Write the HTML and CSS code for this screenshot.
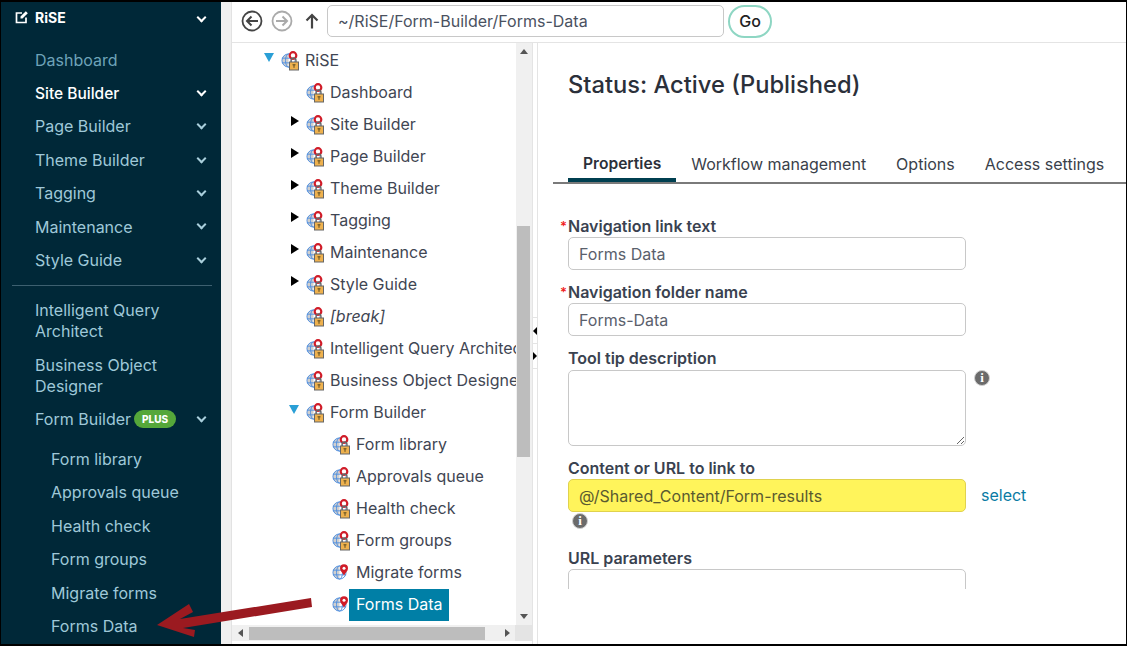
FILE: index.html
```html
<!DOCTYPE html>
<html lang="en">
<head>
  <meta charset="UTF-8">
  <title>RiSE - Forms Data</title>
  <link rel="stylesheet" href="styles.css">
</head>
<body>

<svg class="icon-defs" width="0" height="0">
  <defs>
    <symbol id="globe" viewBox="0 0 16 16">
      <path d="M8 1a7 7 0 0 0 0 14z" fill="#cfcfcf"/>
      <circle cx="8" cy="8" r="7" fill="none" stroke="#4f8fe0" stroke-width="1"/>
      <ellipse cx="8" cy="8" rx="3.200" ry="7" fill="none" stroke="#4f8fe0" stroke-width="1"/>
      <path d="M1 5.500h14M1 10.500h14" stroke="#4f8fe0" stroke-width="1"/>
    </symbol>
    <symbol id="page-locked" viewBox="0 0 18 20">
      <use href="#globe" x="0" y="2" width="15" height="15"/>
      <circle cx="12" cy="4.500" r="3.300" fill="#fff" stroke="#d01c28" stroke-width="2.200"/>
      <path d="M10 11V9.500a2.500 2.500 0 0 1 5 0V11" fill="none" stroke="#666" stroke-width="1.300"/>
      <rect x="8.500" y="11" width="9" height="8" fill="#eeb14e" stroke="#666" stroke-width="1"/>
      <path d="M11.500 13.800h3M13 13.800v3" stroke="#5a4a20" stroke-width="1"/>
    </symbol>
    <symbol id="page-pin" viewBox="0 0 18 20">
      <use href="#globe" x="0" y="2" width="15" height="15"/>
      <path d="M12 12.500c-1.600-2.700-4-4.500-4-7.200a4 4 0 0 1 8 0c0 2.700-2.400 4.500-4 7.200z" fill="#d01c28"/>
      <circle cx="12" cy="5.200" r="1.500" fill="#fff"/>
    </symbol>
  </defs>
</svg>

<div class="page">
  <nav class="sidebar">
    <div class="side-head">
      <svg class="edit-icon" viewBox="0 0 14 14"><path d="M11 7.500V12.500H1.500V3H7" fill="none" stroke="#fff" stroke-width="1.700"/><path d="M5.500 8.500V6.500L10.800 1.200l2 2L7.500 8.500z" fill="#fff"/></svg>
      <span class="side-title">RiSE</span>
      <span class="chev chev-white"></span>
    </div>
    <ul class="side-list">
      <li class="side-item">Dashboard</li>
      <li class="side-item is-active">Site Builder<span class="chev chev-white"></span></li>
      <li class="side-item is-light">Page Builder<span class="chev"></span></li>
      <li class="side-item is-light">Theme Builder<span class="chev"></span></li>
      <li class="side-item is-light">Tagging<span class="chev"></span></li>
      <li class="side-item is-light">Maintenance<span class="chev"></span></li>
      <li class="side-item is-light">Style Guide<span class="chev"></span></li>
    </ul>
    <hr class="side-rule">
    <ul class="side-list">
      <li class="side-item is-light is-wrapped">Intelligent Query Architect</li>
      <li class="side-item is-light is-wrapped">Business Object Designer</li>
      <li class="side-item is-light">Form Builder <span class="plus-badge">PLUS</span><span class="chev"></span></li>
    </ul>
    <ul class="side-list sub-list">
      <li class="side-item is-light">Form library</li>
      <li class="side-item is-light">Approvals queue</li>
      <li class="side-item is-light">Health check</li>
      <li class="side-item is-light">Form groups</li>
      <li class="side-item is-light">Migrate forms</li>
      <li class="side-item is-light">Forms Data</li>
    </ul>
  </nav>

  <div class="gutter"></div>

  <main class="main">
    <div class="toolbar">
      <svg class="nav-btn" viewBox="0 0 22 22"><circle cx="11" cy="11" r="9.500" fill="none" stroke="#444" stroke-width="1.800"/><path d="M17 11H6M10.500 6.500L6 11l4.500 4.500" fill="none" stroke="#444" stroke-width="2"/></svg>
      <svg class="nav-btn" viewBox="0 0 22 22"><circle cx="11" cy="11" r="9.500" fill="none" stroke="#aaa" stroke-width="1.800"/><path d="M5 11h11M11.500 6.500L16 11l-4.500 4.500" fill="none" stroke="#aaa" stroke-width="2"/></svg>
      <svg class="up-btn" viewBox="0 0 14 16"><path d="M7 15.500V2M1.500 7.500L7 2l5.500 5.500" fill="none" stroke="#444" stroke-width="2.200"/></svg>
      <input class="path-input" type="text" value="~/RiSE/Form-Builder/Forms-Data">
      <button class="go-btn">Go</button>
    </div>

    <div class="panes">
      <div class="tree-pane">
        <div class="tree-view">
          <ul class="tree">
            <li class="tree-row lvl-0"><span class="twist twist-open"></span><svg class="page-icon"><use href="#page-locked"/></svg>RiSE</li>
            <li class="tree-row lvl-1"><span class="twist"></span><svg class="page-icon"><use href="#page-locked"/></svg>Dashboard</li>
            <li class="tree-row lvl-1"><span class="twist twist-closed"></span><svg class="page-icon"><use href="#page-locked"/></svg>Site Builder</li>
            <li class="tree-row lvl-1"><span class="twist twist-closed"></span><svg class="page-icon"><use href="#page-locked"/></svg>Page Builder</li>
            <li class="tree-row lvl-1"><span class="twist twist-closed"></span><svg class="page-icon"><use href="#page-locked"/></svg>Theme Builder</li>
            <li class="tree-row lvl-1"><span class="twist twist-closed"></span><svg class="page-icon"><use href="#page-locked"/></svg>Tagging</li>
            <li class="tree-row lvl-1"><span class="twist twist-closed"></span><svg class="page-icon"><use href="#page-locked"/></svg>Maintenance</li>
            <li class="tree-row lvl-1"><span class="twist twist-closed"></span><svg class="page-icon"><use href="#page-locked"/></svg>Style Guide</li>
            <li class="tree-row lvl-1"><span class="twist"></span><svg class="page-icon"><use href="#page-locked"/></svg><em>[break]</em></li>
            <li class="tree-row lvl-1"><span class="twist"></span><svg class="page-icon"><use href="#page-locked"/></svg>Intelligent Query Architect</li>
            <li class="tree-row lvl-1"><span class="twist"></span><svg class="page-icon"><use href="#page-locked"/></svg>Business Object Designer</li>
            <li class="tree-row lvl-1"><span class="twist twist-open"></span><svg class="page-icon"><use href="#page-locked"/></svg>Form Builder</li>
            <li class="tree-row lvl-2"><span class="twist"></span><svg class="page-icon"><use href="#page-locked"/></svg>Form library</li>
            <li class="tree-row lvl-2"><span class="twist"></span><svg class="page-icon"><use href="#page-locked"/></svg>Approvals queue</li>
            <li class="tree-row lvl-2"><span class="twist"></span><svg class="page-icon"><use href="#page-locked"/></svg>Health check</li>
            <li class="tree-row lvl-2"><span class="twist"></span><svg class="page-icon"><use href="#page-locked"/></svg>Form groups</li>
            <li class="tree-row lvl-2"><span class="twist"></span><svg class="page-icon"><use href="#page-pin"/></svg>Migrate forms</li>
            <li class="tree-row lvl-2"><span class="twist"></span><svg class="page-icon"><use href="#page-pin"/></svg><span class="tree-selected">Forms Data</span></li>
          </ul>
          <div class="vscroll">
            <span class="tri tri-up"></span>
            <div class="vtrack"><div class="vthumb"></div></div>
            <span class="tri tri-down"></span>
          </div>
        </div>
        <div class="hscroll">
          <span class="tri tri-left"></span>
          <div class="htrack"><div class="hthumb"></div></div>
          <span class="tri tri-right"></span>
          <div class="scroll-corner"></div>
        </div>
      </div>

      <div class="splitter">
        <div class="split-btns">
          <span class="split-btn"><span class="tri tri-left tri-black"></span></span>
          <span class="split-btn"><span class="tri tri-right tri-black"></span></span>
        </div>
      </div>

      <div class="form-pane">
        <h1 class="status">Status: Active (Published)</h1>
        <div class="tabs">
          <span class="tab is-current">Properties</span>
          <span class="tab">Workflow management</span>
          <span class="tab">Options</span>
          <span class="tab">Access settings</span>
        </div>
        <form class="fields">
          <label class="field-label is-required">Navigation link text</label>
          <input class="field-input" type="text" value="Forms Data">
          <label class="field-label is-required">Navigation folder name</label>
          <input class="field-input" type="text" value="Forms-Data">
          <label class="field-label">Tool tip description</label>
          <div class="field-row field-row-top">
            <textarea class="field-input field-area"></textarea>
            <span class="info-icon info-side">i</span>
          </div>
          <label class="field-label">Content or URL to link to</label>
          <div class="field-row">
            <input class="field-input is-marked" type="text" value="@/Shared_Content/Form-results">
            <a class="select-link">select</a>
          </div>
          <span class="info-icon info-under">i</span>
          <label class="field-label">URL parameters</label>
          <input class="field-input" type="text">
        </form>
      </div>
    </div>
  </main>

  <svg class="callout" viewBox="0 0 1127 646">
    <polygon points="157,625 189,604 193,612 180,619 311,598 312,607 183,628 195,630 194,637" fill="#9b1a20"/>
  </svg>
</div>

</body>
</html>
```

FILE: styles.css
```css
* { box-sizing: border-box; }
html, body { margin: 0; height: 100%; }
body { font-family: Inter, "Open Sans", sans-serif; font-size: 16px; color: #3f4653; background: #fff; overflow: hidden; }
ul { list-style: none; margin: 0; padding: 0; }
.icon-defs { position: absolute; }

.page {
  display: flex; width: 1127px; height: 646px; position: relative;
  border-top: 2px solid #000; border-left: 1px solid #000; border-bottom: 2px solid #000; border-right: 1px solid #000;
}

/* left nav */
.sidebar { width: 220px; flex: none; background: #002838; color: #6ea3b8; padding-top: 3px; }
.side-head { display: flex; align-items: center; height: 24px; padding: 0 15px 0 14px; margin-bottom: 14.400px; color: #fff; font-weight: 700; }
.edit-icon { width: 14px; height: 14px; margin-right: 6px; }
.side-title { flex: 1; font-size: 14px; }
.side-item {
  display: flex; align-items: center; position: relative; min-height: 33.400px;
  padding: 6px 14px 6px 34px; line-height: 21px; white-space: nowrap;
}
.side-item.is-wrapped { white-space: normal; padding-top: 7px; padding-bottom: 6px; padding-right: 40px; min-height: 55px; }
.side-item.is-light { color: #9fc8d8; }
.side-item.is-active { color: #fff; font-weight: 500; font-size: 15.500px; }
.side-item .chev { position: absolute; right: 16px; top: 11px; }
.side-rule { margin: 8px 9px 6.600px 11px; border: 0; border-top: 1px solid #3d6070; }
.sub-list { padding-top: 6.700px; }
.sub-list .side-item { padding-left: 50px; }
.chev {
  display: inline-block; width: 7px; height: 7px; margin-left: auto;
  border-right: 2px solid #a9cfdc; border-bottom: 2px solid #a9cfdc; transform: rotate(45deg);
}
.chev-white { border-color: #fff; }
.side-head .chev { margin-right: 1px; }
.plus-badge {
  display: inline-block; margin-left: 3px; padding: 0 8px; border-radius: 10px; background: #55a73a;
  color: #fff; font-size: 10px; font-weight: 800; line-height: 18px;
}

.gutter { width: 11px; flex: none; background: #f0f0f0; border-right: 1px solid #e2e2e2; }

/* main area */
.main { flex: 1; min-width: 0; display: flex; flex-direction: column; }
.toolbar { display: flex; align-items: center; height: 41px; flex: none; border-bottom: 1px solid #e4e4e4; padding: 0 0 2px 9px; }
.nav-btn { width: 22px; height: 22px; margin-right: 8px; }
.up-btn { width: 14px; height: 16px; margin: 0 8px 0 4px; }
.path-input {
  width: 397px; height: 32px; padding: 0 10px; font: inherit; color: #4a5160;
  border: 1px solid #c8c8c8; border-radius: 5px; background: #fff;
}
.go-btn {
  width: 44px; height: 33px; margin-left: 4px; font: inherit; font-weight: 500; color: #222;
  border: 2px solid #8ed6c3; border-radius: 17px; background: #fff;
}

.panes { flex: 1; display: flex; min-height: 0; }

/* tree */
.tree-pane { width: 300px; flex: none; display: flex; flex-direction: column; padding-bottom: 3px; }
.tree-view { flex: 1; display: flex; min-height: 0; }
.tree { flex: 1; min-width: 0; overflow: hidden; padding-top: 1px; }
.tree-row { display: flex; align-items: center; height: 32px; white-space: nowrap; }
.lvl-0 { padding-left: 32px; }
.lvl-1 { padding-left: 57px; }
.lvl-2 { padding-left: 83px; }
.twist { width: 10px; height: 10px; margin-right: 7px; margin-bottom: 6px; flex: none; }
.twist-closed { width: 8px; margin-left: 2px; border-left: 8px solid #000; border-top: 5px solid transparent; border-bottom: 5px solid transparent; }
.twist-open { width: 0; height: 0; border-top: 9px solid #2a9fd6; border-left: 5px solid transparent; border-right: 5px solid transparent; }
.page-icon { width: 18px; height: 20px; margin-right: 6px; margin-top: 2px; flex: none; }
.tree-selected { background: #007fa6; color: #fff; margin: 2px 0 0 -7px; padding: 0 7px; height: 32px; line-height: 30px; }
.vscroll { width: 16px; flex: none; display: flex; flex-direction: column; align-items: center; background: #f0f0f0; }
.vtrack { flex: 1; width: 100%; padding: 166px 2px 151px 1px; }
.vthumb { height: 100%; background: #bdbdbd; }
.hscroll { height: 16px; flex: none; display: flex; align-items: center; background: #f0f0f0; }
.htrack { flex: 1; height: 100%; padding: 2px 20px 1px 0; }
.hthumb { height: 100%; background: #bdbdbd; }
.scroll-corner { width: 17px; height: 100%; margin-left: 5px; background: #e4e4e4; }
.tri { display: block; width: 0; height: 0; flex: none; border: 4px solid transparent; }
.tri-up { border-top: 0; border-bottom: 5px solid #555; margin: 6px 0; }
.tri-down { border-bottom: 0; border-top: 5px solid #555; margin: 6px 0; }
.tri-left { border-left: 0; border-right: 5px solid #555; margin: 0 6px; }
.tri-right { border-right: 0; border-left: 5px solid #555; }
.tri-black { border-left-color: #000; border-right-color: #000; margin: 0; border-left-width: 0; border-right-width: 4px; }
.tri-right.tri-black { border-left-width: 4px; border-right-width: 0; }

/* splitter */
.splitter { width: 6px; flex: none; background: #fff; border-left: 1px solid #e4e4e4; border-right: 1px solid #e4e4e4; padding-top: 274px; }
.split-btns { display: flex; flex-direction: column; }
.split-btn { height: 26px; display: flex; align-items: center; border-top: 1px solid #e4e4e4; }
.split-btn:last-child { border-bottom: 1px solid #e4e4e4; }

/* form side */
.form-pane { flex: 1; min-width: 0; height: 546px; overflow: hidden; padding: 25px 0 0 15px; }
.status { margin: 0 0 0 15px; font-size: 23.700px; line-height: 34px; font-weight: 500; color: #2b303a; }
.tabs { display: flex; margin-top: 44px; height: 38px; padding-left: 15px; border-bottom: 2px solid #7a7a7a; }
.tab { padding: 0 15px; line-height: 36px; height: 36px; white-space: nowrap; color: #3a3f4a; }
.tab.is-current { font-weight: 600; font-size: 15.600px; border-bottom: 4px solid #003f50; color: #2b303a; }
.fields { padding: 31px 0 0 15px; display: flex; flex-direction: column; align-items: flex-start; }
.field-label { font-weight: 600; line-height: 22px; color: #3a4250; position: relative; }
.field-label.is-required::before { content: "*"; position: absolute; left: -8px; top: 0; color: #f01c1c; font-size: 13px; }
.field-input {
  display: block; width: 398px; height: 33px; padding: 0 10px; margin-bottom: 11px; font: inherit; color: #5a606c;
  border: 1px solid #c8c8c8; border-radius: 5px; background: #fff; flex: none;
}
.field-area { height: 76px; resize: vertical; }
.field-row { display: flex; align-items: flex-start; }
.field-row-top { margin-top: 1px; }
.is-marked { background: #fff45b; border-color: #e0d24e; margin-bottom: 0; color: #5a5a30; }
.select-link { margin-left: 15px; line-height: 33px; color: #0a7ba3; }
.info-icon {
  display: block; width: 16px; height: 16px; border-radius: 50%; background: #6b6b6b; border: 1px solid #d0d0d0;
  color: #fff; font: 700 13px/14px "Liberation Serif", serif; text-align: center;
}
.info-side { margin: 0 0 0 8px; }
.info-under { margin: 1px 0 18px 4px; }

/* red pointer over the page */
.callout { position: absolute; left: -1px; top: -2px; width: 1127px; height: 646px; pointer-events: none; }
```
